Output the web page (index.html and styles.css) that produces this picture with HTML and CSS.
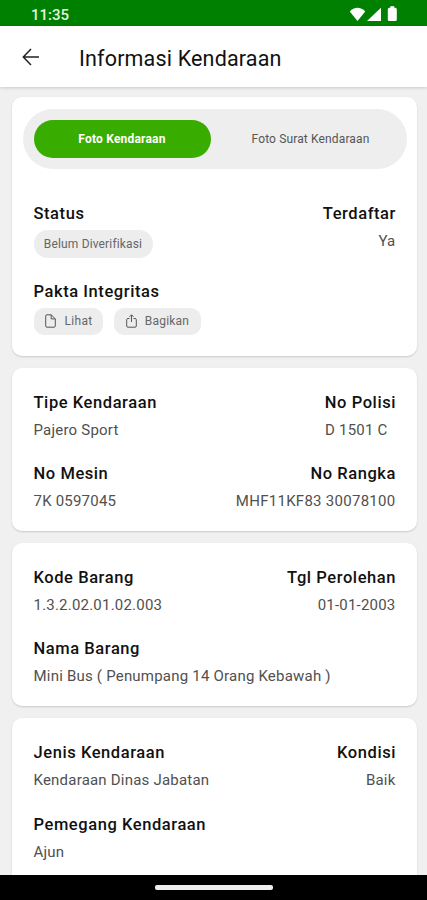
FILE: index.html
```html
<!DOCTYPE html>
<html lang="id">
<head>
<meta charset="utf-8">
<title>Informasi Kendaraan</title>
<link rel="stylesheet" href="styles.css">
</head>
<body>
<div class="screen">
  <div class="status-bar">
    <span class="clock">11:35</span>
    <svg class="status-icons" width="50" height="18" viewBox="0 0 50 18" fill="#fff">
      <path d="M0.8 4.6C5 -.4 12 -.4 16.200 4.600L8.500 14Z"/>
      <path d="M32 .800V14H18Z"/>
      <path d="M41.300 -.800h4v1.500h1q1.500 0 1.500 1.500V12.500q0 1.500-1.500 1.500h-6q-1.500 0-1.500-1.500V2.200q0-1.500 1.500-1.500h1z"/>
    </svg>
  </div>
  <header class="app-bar">
    <svg class="back" width="18" height="18" viewBox="0 0 18 18" fill="none" stroke="#222" stroke-width="1.500"><path d="M17 9H1.500M9 1L1.300 9L9 17"/></svg>
    <h1 class="title">Informasi Kendaraan</h1>
  </header>
  <main class="content">
    <section class="card card-main">
      <div class="tabs">
        <div class="tab tab-active">Foto Kendaraan</div>
        <div class="tab tab-other">Foto Surat Kendaraan</div>
      </div>
      <div class="details">
        <div class="row">
          <div class="field"><div class="label">Status</div><span class="chip chip-status">Belum Diverifikasi</span></div>
          <div class="field end"><div class="label">Terdaftar</div><div class="value">Ya</div></div>
        </div>
        <div class="field pact">
          <div class="label">Pakta Integritas</div>
          <div class="chips">
            <span class="chip chip-view"><svg width="11" height="14" viewBox="0 0 11 14" fill="none" stroke="#555"><path d="M6.200 .8H2Q.7 .8 .7 2.100V11.900Q.7 13.200 2 13.200H9Q10.300 13.200 10.300 11.900V4.900ZM6.200 .8V4.900H10.300"/></svg>Lihat</span>
            <span class="chip chip-share"><svg width="11" height="14" viewBox="0 0 11 14" fill="none" stroke="#555"><path d="M3.500 4.500H1.900Q.7 4.500 .7 5.700V12Q.7 13.200 1.900 13.200H9.100Q10.300 13.200 10.300 12V5.700Q10.300 4.500 9.100 4.500H7.500M5.500 8V1M3.500 2.800L5.500 .8L7.500 2.800"/></svg>Bagikan</span>
          </div>
        </div>
      </div>
    </section>
    <section class="card">
      <div class="row">
        <div class="field"><div class="label">Tipe Kendaraan</div><div class="value">Pajero Sport</div></div>
        <div class="field end"><div class="label">No Polisi</div><div class="value plate">D 1501 C</div></div>
      </div>
      <div class="row">
        <div class="field"><div class="label">No Mesin</div><div class="value">7K 0597045</div></div>
        <div class="field end"><div class="label">No Rangka</div><div class="value chassis">MHF11KF83 30078100</div></div>
      </div>
    </section>
    <section class="card">
      <div class="row">
        <div class="field"><div class="label">Kode Barang</div><div class="value">1.3.2.02.01.02.003</div></div>
        <div class="field end"><div class="label">Tgl Perolehan</div><div class="value">01-01-2003</div></div>
      </div>
      <div class="field"><div class="label">Nama Barang</div><div class="value">Mini Bus ( Penumpang 14 Orang Kebawah )</div></div>
    </section>
    <section class="card card-last">
      <div class="row">
        <div class="field"><div class="label">Jenis Kendaraan</div><div class="value">Kendaraan Dinas Jabatan</div></div>
        <div class="field end"><div class="label">Kondisi</div><div class="value">Baik</div></div>
      </div>
      <div class="field"><div class="label">Pemegang Kendaraan</div><div class="value">Ajun</div></div>
    </section>
  </main>
  <div class="nav-bar"><div class="handle"></div></div>
</div>
</body>
</html>
```
FILE: styles.css
```css
* { box-sizing: border-box; }
body { margin: 0; font-family: Roboto, "Liberation Sans", sans-serif; color: #111; }
.screen { width: 427px; height: 900px; display: flex; flex-direction: column; overflow: hidden; background: #f0f0f0; }
.status-bar { flex: none; height: 26px; background: #008000; display: flex; justify-content: space-between; padding: 7px 28px 0 31px; }
.clock { font-size: 15px; line-height: 17px; font-weight: 500; color: #e2f3e2; letter-spacing: 0; }
.status-icons { display: block; overflow: visible; }
.app-bar { flex: none; height: 61px; background: #fff; display: flex; align-items: center; padding: 3px 22px 0; box-shadow: 0 1px 3px rgba(0,0,0,.16); z-index: 1; }
.back { flex: none; margin-top: -2px; }
.title { margin: 1px 0 0 39px; font-size: 21.500px; line-height: 28px; font-weight: 400; letter-spacing: .17px; }
.content { flex: 1; min-height: 0; overflow: hidden; padding: 10px 10px 0 12px; display: flex; flex-direction: column; gap: 11.500px; }
.card { flex: none; height: 163.500px; background: #fff; border-radius: 10px; padding: 23px 21.500px 0; box-shadow: 0 1px 2px rgba(0,0,0,.16); display: flex; flex-direction: column; gap: 21px; }
.card-main { height: 259px; padding: 11.500px 10.500px 0; gap: 33.500px; }
.card-last { height: 235px; gap: 21.500px; }
.tabs { height: 60px; flex: none; border-radius: 30px; background: #eee; padding: 11px; display: flex; }
.tab { flex: 1; height: 38px; border-radius: 19px; display: flex; align-items: center; justify-content: center; font-size: 12px; color: #555; letter-spacing: .14px; }
.tab-active { flex: 0 0 177px; background: #38ad00; color: #fff; font-weight: 700; letter-spacing: .2px; }
.tab-other { padding-left: 15px; }
.details { padding: 0 11px; }
.row { display: flex; justify-content: space-between; }
.end { text-align: right; }
.label { font-size: 16.500px; line-height: 24px; font-weight: 500; letter-spacing: .57px; }
.end .label { margin-right: -.5px; }
.value { margin-top: 4px; font-size: 15px; line-height: 22px; color: #505050; letter-spacing: .21px; }
.plate { padding-right: 8px; }
.chassis { letter-spacing: .28px; }
.card .row .field, .card > .field { min-height: 50.500px; }
.chip { display: flex; align-items: center; justify-content: center; height: 27px; background: #ededed; border-radius: 10px; font-size: 12px; color: #666; letter-spacing: .35px; }
.chip-status { width: 119px; height: 28px; border-radius: 14px; margin-top: 4px; letter-spacing: .15px; }
.chips { display: flex; gap: 11px; margin-top: 4px; }
.chip-view { width: 69px; gap: 8px; padding-left: 2px; }
.chip-share { width: 87px; gap: 8px; padding-left: 1px; letter-spacing: .2px; }
.pact { margin-top: 21.500px; }
.nav-bar { flex: none; height: 25px; background: #000; display: flex; justify-content: center; padding-top: 9.500px; }
.handle { width: 118px; height: 5px; border-radius: 2px; background: #eee; }
```
